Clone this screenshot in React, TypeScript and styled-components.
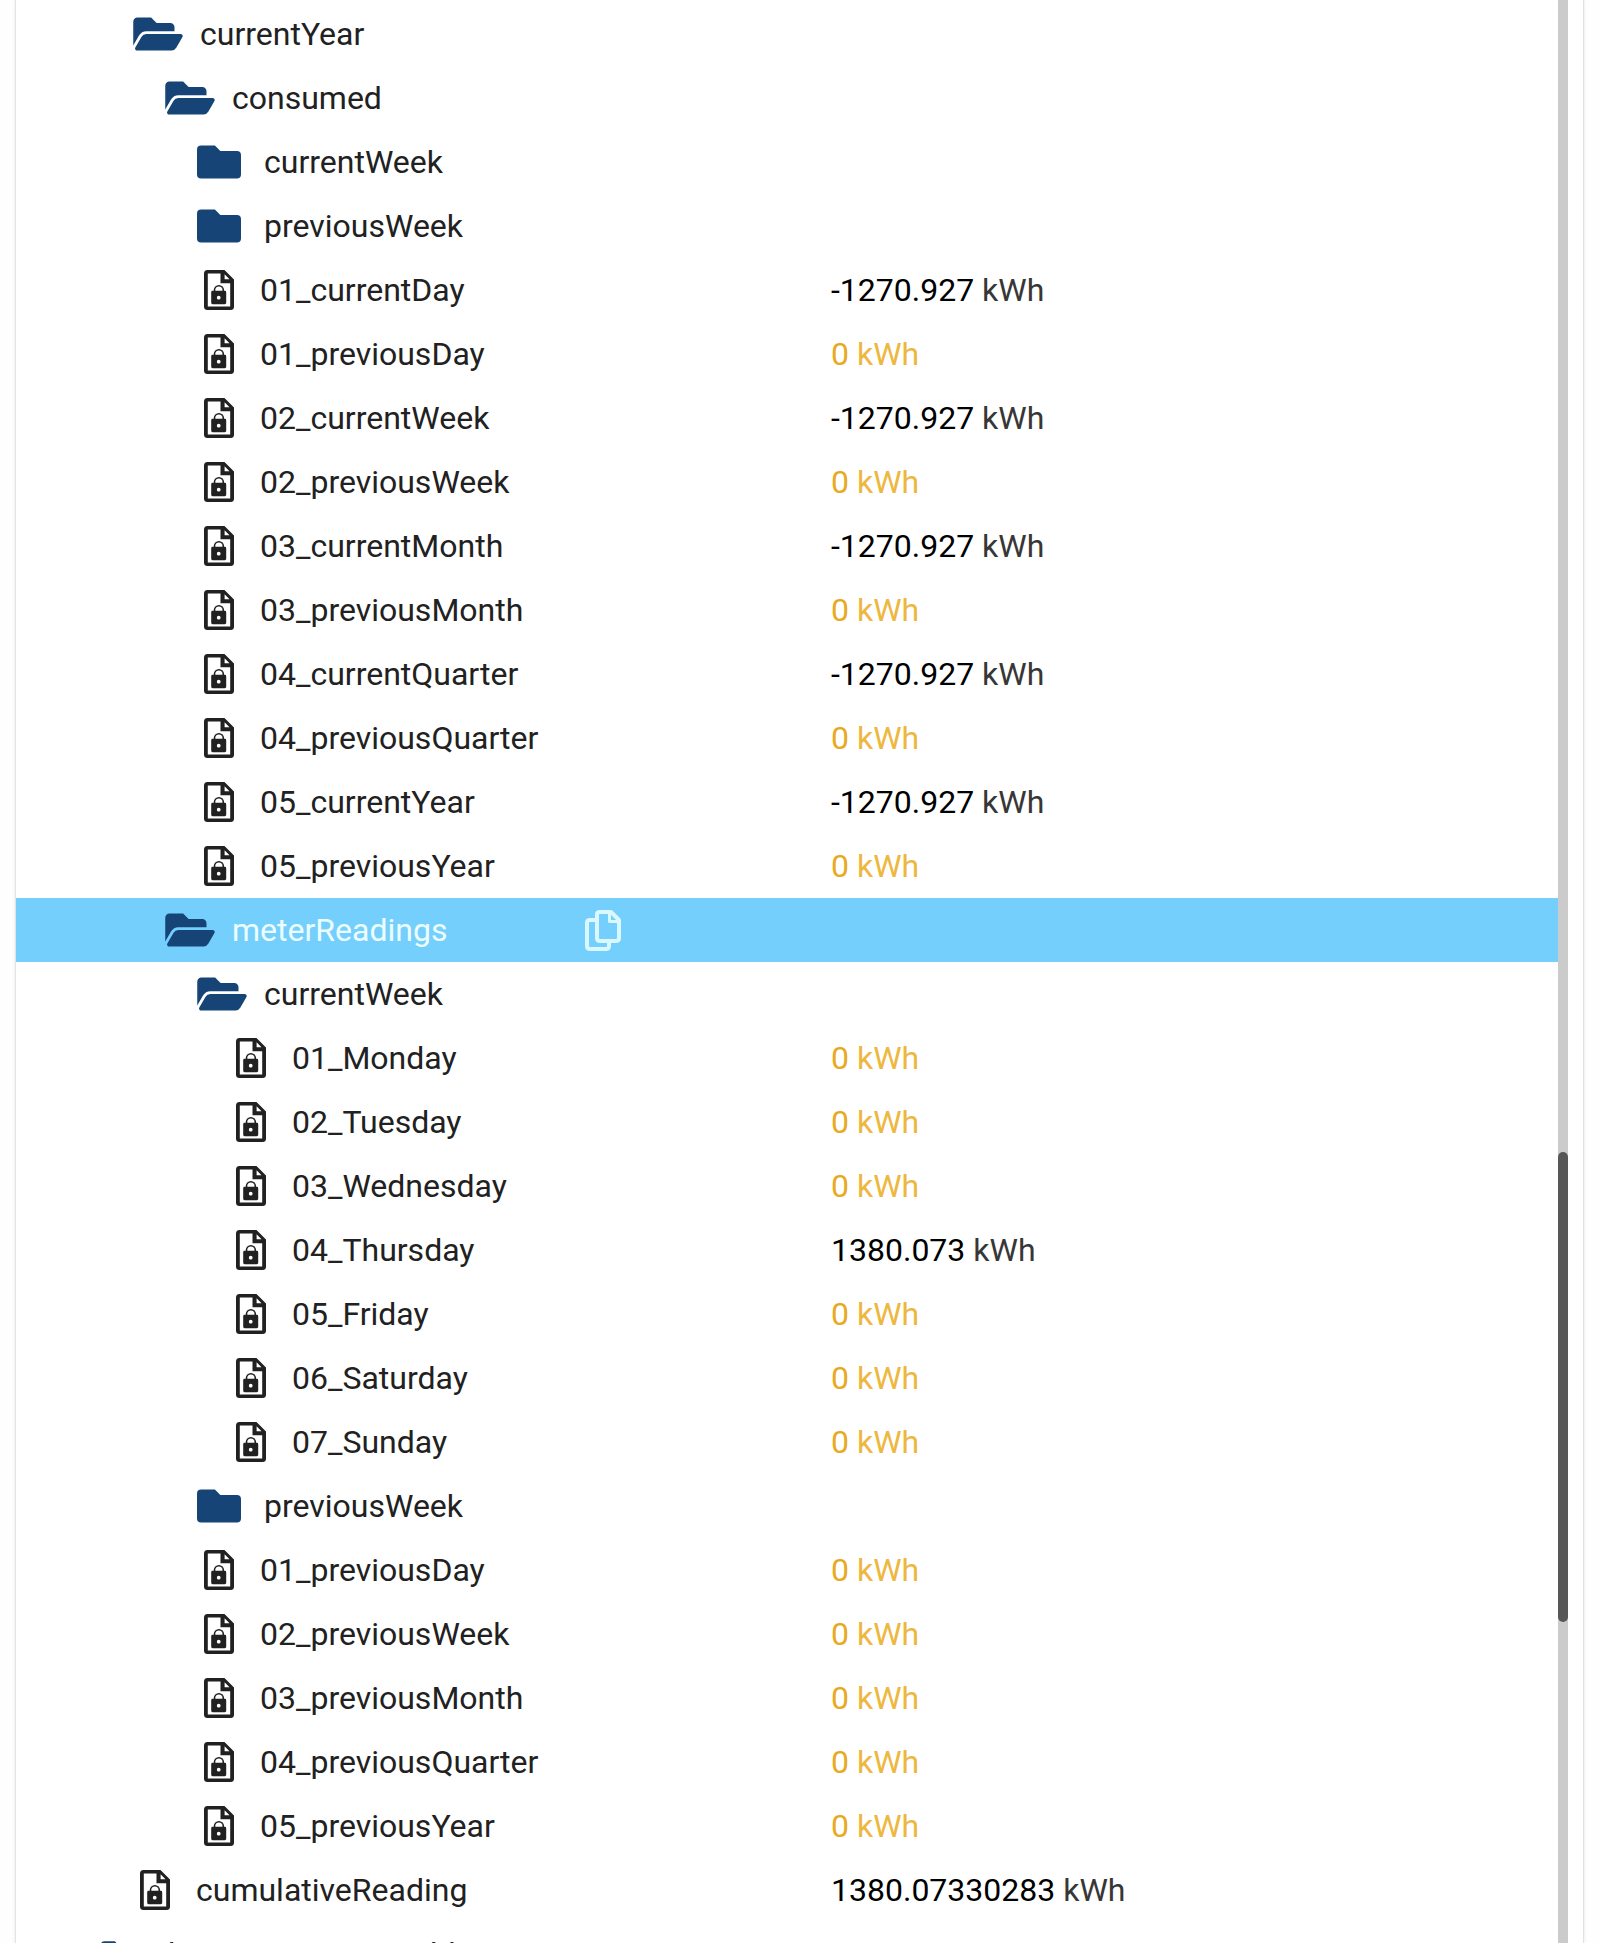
import React from "react";
import styled, { createGlobalStyle } from "styled-components";

const GlobalStyle = createGlobalStyle`
  html, body { margin: 0; padding: 0; background: #fefefe; overflow: hidden; }
  * { box-sizing: border-box; }
`;

type Kind = "open" | "closed" | "state";
interface Node {
  name: string;
  level: number;
  kind: Kind;
  value?: string;
  selected?: boolean;
  small?: boolean;
}

const closed = (level: number, name: string): Node => ({ level, name, kind: "closed" });
const open = (level: number, name: string, selected = false): Node => ({ level, name, kind: "open", selected });
const state = (level: number, name: string, value = "0"): Node => ({ level, name, kind: "state", value });

const nodes: Node[] = [
  open(1, "currentYear"),
  open(2, "consumed"),
  closed(3, "currentWeek"),
  closed(3, "previousWeek"),
  state(3, "01_currentDay", "-1270.927"),
  state(3, "01_previousDay"),
  state(3, "02_currentWeek", "-1270.927"),
  state(3, "02_previousWeek"),
  state(3, "03_currentMonth", "-1270.927"),
  state(3, "03_previousMonth"),
  state(3, "04_currentQuarter", "-1270.927"),
  state(3, "04_previousQuarter"),
  state(3, "05_currentYear", "-1270.927"),
  state(3, "05_previousYear"),
  open(2, "meterReadings", true),
  open(3, "currentWeek"),
  state(4, "01_Monday"),
  state(4, "02_Tuesday"),
  state(4, "03_Wednesday"),
  state(4, "04_Thursday", "1380.073"),
  state(4, "05_Friday"),
  state(4, "06_Saturday"),
  state(4, "07_Sunday"),
  closed(3, "previousWeek"),
  state(3, "01_previousDay"),
  state(3, "02_previousWeek"),
  state(3, "03_previousMonth"),
  state(3, "04_previousQuarter"),
  state(3, "05_previousYear"),
  state(1, "cumulativeReading", "1380.07330283"),
  { ...closed(0, "homeconnect_enable"), small: true },
];

const Page = styled.main`
  height: 1943px;
  padding: 0 16px 0 15px;
  display: flex;
  overflow: hidden;
  background: #fefefe;
  font-family: Roboto, "Liberation Sans", sans-serif;
`;

const Panel = styled.section`
  flex: 1;
  display: flex;
  background: #fff;
  border-left: 1px solid #e4e4e4;
  border-right: 1px solid #e2e2e2;
  box-shadow: 0 0 3px rgba(0, 0, 0, 0.1);
  padding-right: 15px;
`;

const Tree = styled.div`
  width: 1542px;
  flex: none;
  padding-top: 2px;
`;

const Row = styled.div<{ $selected?: boolean }>`
  height: 64px;
  display: grid;
  grid-template-columns: 815px 1fr;
  align-items: center;
  font-size: 32px;
  line-height: 48px;
  white-space: nowrap;
  color: ${(p) => (p.$selected ? "#ecfdff" : "#212121")};
  background: ${(p) => (p.$selected ? "#75cffd" : "transparent")};
`;

const NameCell = styled.div<{ $level: number }>`
  display: flex;
  align-items: center;
  height: 64px;
  padding-left: ${(p) => 85 + p.$level * 32}px;
`;

const IconSlot = styled.span<{ $state: boolean }>`
  width: ${(p) => (p.$state ? 63 : 67)}px;
  flex: none;
  display: flex;
  align-items: center;
  padding-left: ${(p) => (p.$state ? 7 : 0)}px;
  color: ${(p) => (p.$state ? "#212121" : "#164477")};
  svg { display: block; fill: currentColor; }
`;

const Label = styled.span<{ $fixed?: boolean }>`
  width: ${(p) => (p.$fixed ? "353px" : "auto")};
`;

const CopyIcon = styled.svg`
  display: block;
  width: 36px;
  height: 41px;
  fill: none;
  stroke: #d9f8ff;
  stroke-width: 4;
  stroke-linejoin: round;
`;

const Value = styled.span<{ $zero: boolean }>`
  color: ${(p) => (p.$zero ? "#e8aa20" : "#000")};
`;

const Unit = styled.span<{ $zero: boolean }>`
  color: ${(p) => (p.$zero ? "#edb740" : "#373737")};
`;

const Track = styled.div`
  width: 10px;
  flex: none;
  background: #cbcbcb;
  padding-top: 1152px;
`;

const Thumb = styled.div`
  height: 470px;
  border-radius: 5px;
  background: #575757;
`;

const FolderClosed = ({ small }: { small?: boolean }) => (
  <svg width={small ? 34 : 44} height={small ? 34 : 44} viewBox="0 0 512 512">
    <path d="M464 128H272l-64-64H48Q0 64 0 112v288q0 48 48 48h416q48 0 48-48V176q0-48-48-48z" />
  </svg>
);

const FolderOpen = () => (
  <svg width="50" height="44" viewBox="0 0 576 512">
    <path d="M572.694 292.093L500.270 416.248A63.997 63.997 0 0 1 444.989 448H45.025c-18.523 0-30.064-20.093-20.731-36.093l72.424-124.155A64 64 0 0 1 152 256h399.964c18.523 0 30.064 20.093 20.730 36.093zM152 224h328v-48c0-26.510-21.490-48-48-48H272l-64-64H48C21.490 64 0 85.490 0 112v278.046l69.077-118.418C86.214 242.250 117.989 224 152 224z" />
  </svg>
);

const StateFile = () => (
  <svg width="30" height="40" viewBox="0 0 30 40">
    <path
      fillRule="evenodd"
      d="M3.500 0H20.500L30 9.500V36.500Q30 40 26.500 40H3.500Q0 40 0 36.500V3.500Q0 0 3.500 0ZM3.800 3.600V36.400H26.200V13.300H16.500V3.600ZM20.600 4.200V9.200H25.500Z"
    />
    <path d="M10.500 22v-1.800a4.400 4.500 0 0 1 8.800 0V22" fill="none" stroke="currentColor" strokeWidth="1.600" />
    <path fillRule="evenodd" d="M8.600 20.800h12.200q1.400 0 1.400 1.400v10.600q0 1.400-1.400 1.400H8.600q-1.400 0-1.400-1.400V22.200q0-1.400 1.400-1.400zM14.700 25.800a1.900 1.900 0 1 0 0 3.800 1.900 1.900 0 0 0 0-3.800z" />
  </svg>
);

const Copy = () => (
  <CopyIcon viewBox="0 0 36 41">
    <path d="M10.500 10H5q-3 0-3 3v23q0 3 3 3h16q3 0 3-3v-5" />
    <path d="M14.500 2H26l8 8v18q0 3-3 3H15q-3 0-3-3V4.500Q12 2 14.500 2z" />
    <path d="M24.500 3v8.500H33" strokeWidth="3" />
  </CopyIcon>
);

const icons: Record<Kind, React.FC<{ small?: boolean }>> = {
  open: FolderOpen,
  closed: FolderClosed,
  state: StateFile,
};

const TreeRow = ({ node }: { node: Node }) => {
  const Icon = icons[node.kind];
  const zero = node.value === "0";
  return (
    <Row $selected={node.selected}>
      <NameCell $level={node.level}>
        <IconSlot $state={node.kind === "state"}><Icon small={node.small} /></IconSlot>
        <Label $fixed={node.selected}>{node.name}</Label>
        {node.selected && <Copy />}
      </NameCell>
      {node.value && (
        <div>
          <Value $zero={zero}>{node.value}</Value> <Unit $zero={zero}>kWh</Unit>
        </div>
      )}
    </Row>
  );
};

export default function App() {
  return (
    <>
      <GlobalStyle />
      <Page>
        <Panel>
          <Tree>
            {nodes.map((node, i) => <TreeRow key={i} node={node} />)}
          </Tree>
          <Track><Thumb /></Track>
        </Panel>
      </Page>
    </>
  );
}
